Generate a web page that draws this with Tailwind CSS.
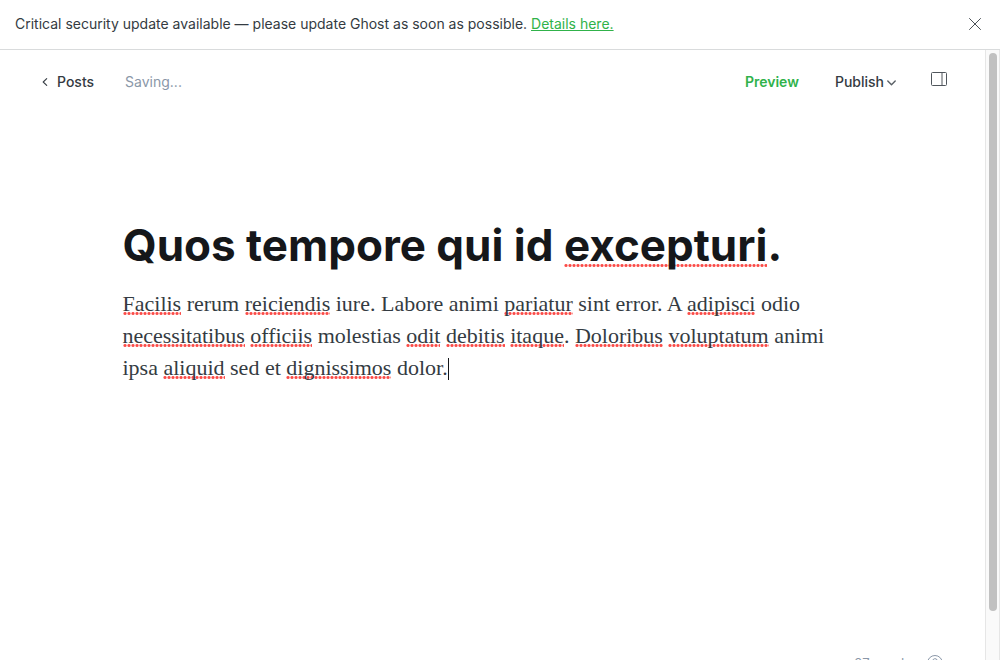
<!DOCTYPE html>
<html lang="en">
<head>
<meta charset="utf-8">
<meta name="viewport" content="width=device-width, initial-scale=1">
<title>Ghost editor</title>
<script src="https://cdn.jsdelivr.net/npm/@tailwindcss/browser@4"></script>
</head>
<body class="flex h-screen flex-col overflow-hidden bg-white font-['Inter',sans-serif] text-sm text-[#343b42]">
  <aside class="flex h-[50px] shrink-0 items-center justify-between border-b border-[#d9dbdc] px-[15px] pb-[2px]">
    <p>Critical security update available — please update Ghost as soon as possible. <a href="#" class="text-[#30b24a] underline">Details here.</a></p>
    <button type="button" aria-label="Close" class="p-1">
      <svg class="block h-3 w-3" viewBox="0 0 12 12" fill="none" stroke="#4a5056" stroke-linecap="round"><path d="M.5.5l11 11M11.5.5l-11 11"/></svg>
    </button>
  </aside>

  <div class="flex min-h-0 flex-1 overflow-hidden">
    <div class="flex h-screen min-w-0 flex-1 flex-col">
      <header class="flex h-16 shrink-0 items-center pr-[38px] pl-[42px]">
        <a href="#" class="flex items-center gap-[9px] font-medium">
          <svg class="h-2 w-[6px]" viewBox="0 0 6 8" fill="none" stroke="#394047" stroke-linecap="round" stroke-linejoin="round" stroke-width="1.1"><path d="M4.7.6 1.2 4l3.5 3.4"/></svg>
          Posts
        </a>
        <span class="ml-[31px] text-[#8a97a8]">Saving...</span>
        <div class="ml-auto flex items-center">
          <button type="button" class="font-semibold text-[#30b24a]">Preview</button>
          <button type="button" class="ml-9 flex items-center gap-[3px] font-medium">
            Publish
            <svg class="mt-[2px] h-[6px] w-[9px]" viewBox="0 0 9 6" fill="none" stroke="#5a6066" stroke-linecap="round" stroke-linejoin="round" stroke-width="1.4"><path d="M.8 1 4.5 4.8 8.2 1"/></svg>
          </button>
          <button type="button" aria-label="Settings" class="mb-[6px] ml-[35px]">
            <svg class="block h-[14px] w-4" viewBox="0 0 16 14" fill="none" stroke="#50565c"><rect x=".5" y=".5" width="15" height="13" rx="1"/><path d="M11 .5v13"/></svg>
          </button>
        </div>
      </header>

      <main class="mx-auto w-full max-w-[740px] flex-1 pt-[104px] [&_u]:bg-[radial-gradient(circle,#fb4c48_1px,#fb4c4890_1.5px,transparent_2px)] [&_u]:bg-[length:4px_3px] [&_u]:bg-repeat-x [&_u]:no-underline">
        <h1 contenteditable="true" spellcheck="false" aria-label="Post title" class="text-[44px] leading-[54px] font-bold text-[#15171a] [&_u]:bg-[position:left_bottom_5px]">Quos tempore qui id <u>excepturi</u>.</h1>
        <div contenteditable="true" spellcheck="false" role="textbox" aria-multiline="true" aria-label="Post content" class="mt-4 font-[Georgia,'Liberation_Serif',serif] text-[22px] leading-8 [&_u]:bg-[position:left_bottom_1px]">
          <p><u>Facilis</u> rerum <u>reiciendis</u> iure. Labore animi <u>pariatur</u> sint error. A <u>adipisci</u> odio<br>
          <u>necessitatibus</u> <u>officiis</u> molestias <u>odit</u> <u>debitis</u> <u>itaque</u>. <u>Doloribus</u> <u>voluptatum</u> animi<br>
          ipsa <u>aliquid</u> sed et <u>dignissimos</u> dolor.<span class="inline-block h-[22px] w-px bg-[#15171a] align-[-5px]"></span></p>
        </div>
      </main>

      <footer class="flex h-[94px] shrink-0 items-center justify-end gap-4 pr-[42px] text-[13px] text-[#8a97a8]">
        <span>27 words</span>
        <a href="#" aria-label="Help">
          <svg class="block size-4" viewBox="0 0 16 16" fill="none" stroke="#8a97a8" stroke-linecap="round"><circle cx="8" cy="8" r="7.5"/><path d="M5.6 6a2.4 2.4 0 1 1 3.5 2.2c-.7.3-1.1.7-1.1 1.4"/><path d="M8 11.8v.1"/></svg>
        </a>
      </footer>
    </div>

    <div aria-hidden="true" class="w-[15px] shrink-0 border-x border-[#e6e6e6] bg-[#fafafa] px-[3px] pt-[3px]">
      <div class="ml-auto h-[92%] w-2 rounded-full bg-[#c1c1c1]"></div>
    </div>
  </div>
</body>
</html>
